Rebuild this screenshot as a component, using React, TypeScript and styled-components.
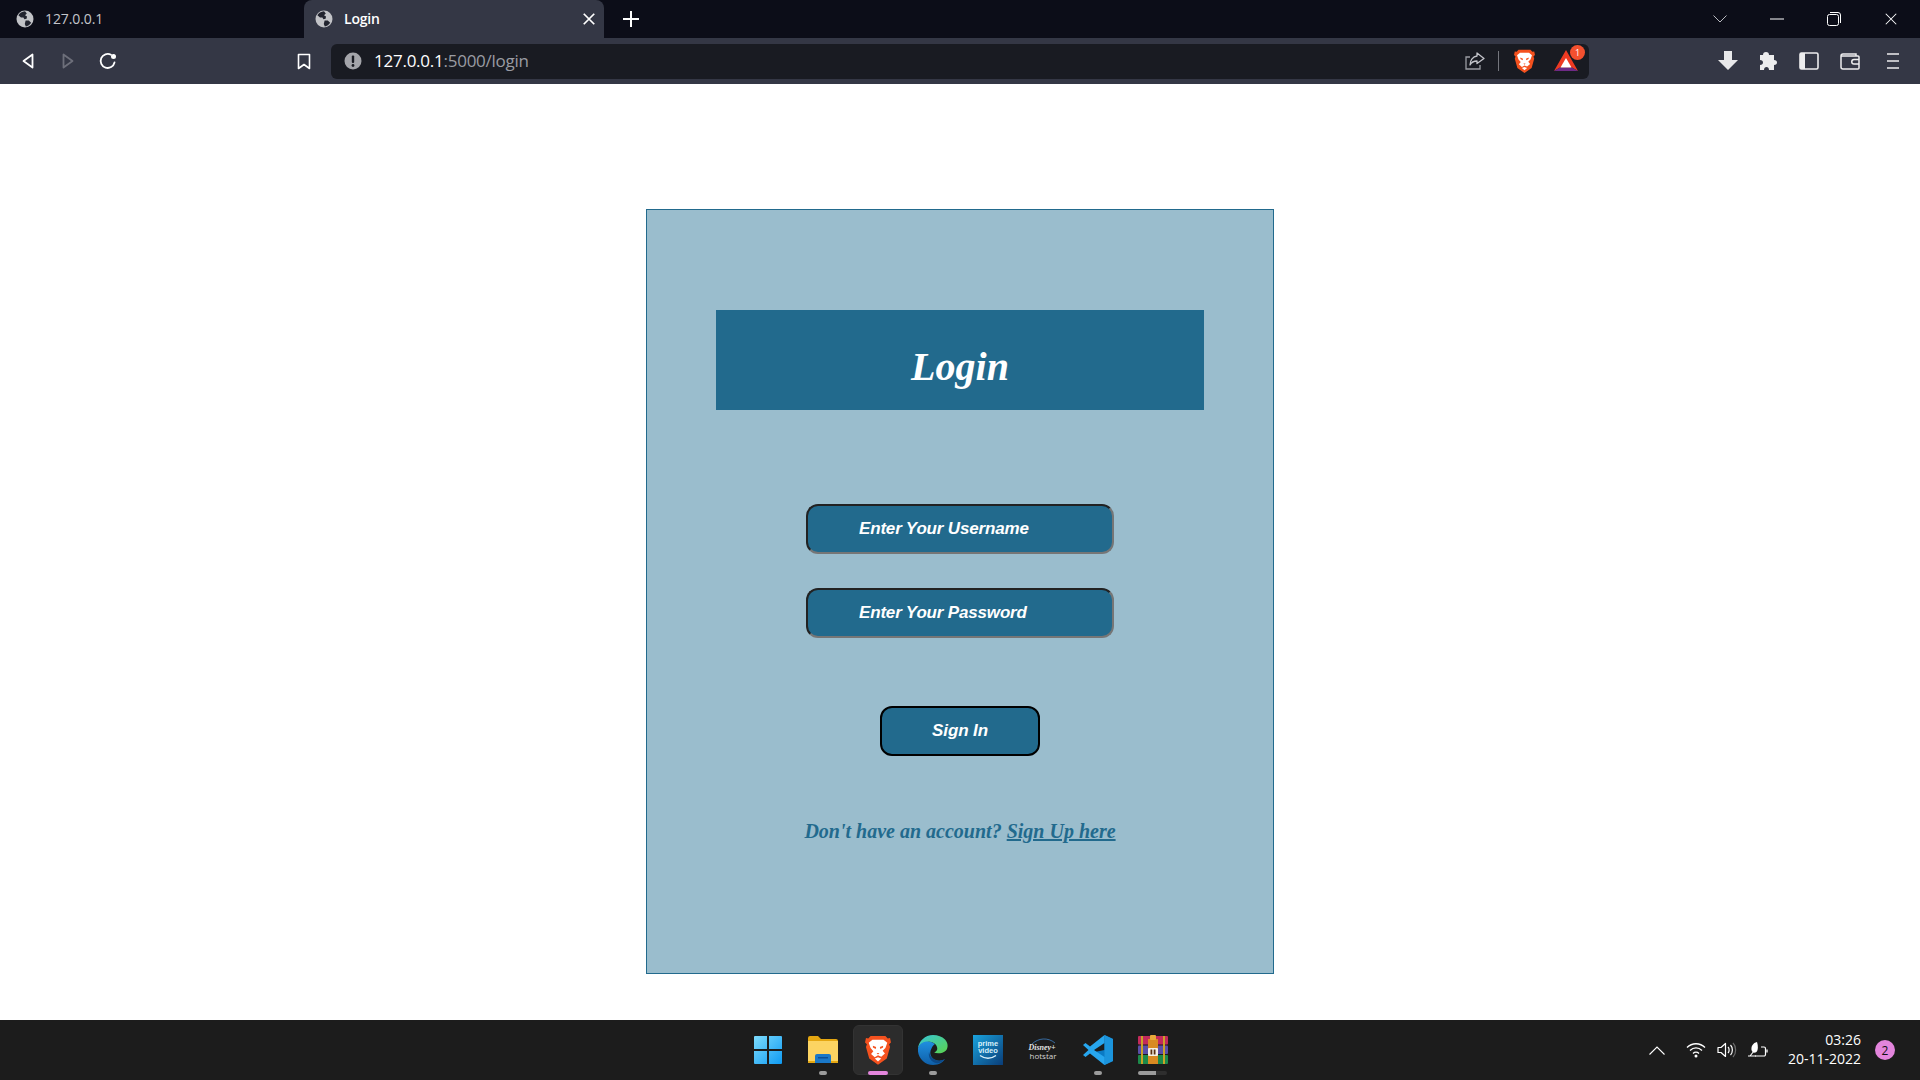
import React from "react";
import styled, { createGlobalStyle } from "styled-components";

const GlobalStyle = createGlobalStyle`
  html, body, #root {
    margin: 0;
    padding: 0;
    height: 100%;
  }
  body {
    background: #ffffff;
    overflow: hidden;
  }
  * {
    box-sizing: border-box;
  }
`;

const Page = styled.div`
  width: 1920px;
  height: 1080px;
  display: flex;
  flex-direction: column;
  font-family: "Open Sans", "Liberation Sans", sans-serif;
`;

/* browser chrome */
const TabStrip = styled.div`
  height: 38px;
  background: #0c0d18;
  display: flex;
  align-items: flex-start;
  flex-shrink: 0;
`;

const Tab = styled.div<{ $active?: boolean }>`
  width: ${(p) => (p.$active ? 300 : 304)}px;
  height: 38px;
  display: flex;
  align-items: center;
  padding-left: ${(p) => (p.$active ? 11 : 16)}px;
  gap: 11px;
  background: ${(p) => (p.$active ? "#343745" : "transparent")};
  border-radius: 8px 8px 0 0;
  font-size: 14px;
  font-weight: ${(p) => (p.$active ? 600 : 400)};
  color: ${(p) => (p.$active ? "#ffffff" : "#c4c5cb")};
  letter-spacing: ${(p) => (p.$active ? "-0.2px" : "-0.1px")};
`;

const TabLabel = styled.span`
  padding-bottom: 2px;
`;

const TabClose = styled.span`
  margin-left: auto;
  margin-right: 8px;
  width: 14px;
  height: 14px;
  display: flex;
`;

const NewTab = styled.div`
  width: 46px;
  height: 38px;
  padding-left: 19px;
  display: flex;
  align-items: center;
`;

const WindowControls = styled.div`
  margin-left: auto;
  display: flex;
  height: 38px;
  align-items: center;
`;

const WindowButton = styled.div<{ $w: number }>`
  width: ${(p) => p.$w}px;
  display: flex;
  justify-content: center;
  align-items: center;
`;

const Toolbar = styled.div`
  height: 46px;
  background: #343745;
  display: flex;
  align-items: center;
  padding-left: 8px;
  flex-shrink: 0;
`;

const ToolSlot = styled.div<{ $w?: number; $ml?: number }>`
  width: ${(p) => p.$w ?? 40}px;
  margin-left: ${(p) => p.$ml ?? 0}px;
  height: 35px;
  display: flex;
  align-items: center;
  justify-content: center;
  flex-shrink: 0;
`;

const AddressBar = styled.div`
  width: 1258px;
  height: 35px;
  margin-left: 7px;
  background: #191b22;
  border-radius: 6px;
  display: flex;
  align-items: center;
  padding-left: 13px;
  flex-shrink: 0;
`;

const UrlText = styled.div`
  margin-left: 12px;
  padding-bottom: 2px;
  font-size: 17px;
  letter-spacing: -0.25px;
  color: #9a9ca3;
`;

const UrlHost = styled.span`
  color: #ffffff;
`;

const AddressEnd = styled.div`
  margin-left: auto;
  display: flex;
  align-items: center;
  height: 35px;
`;

const Divider = styled.div`
  width: 1px;
  height: 20px;
  background: #74767d;
  margin: 0 12px 0 13px;
`;

const RightTools = styled.div`
  margin-left: 119px;
  display: flex;
  align-items: center;
`;

/* login card */
const Main = styled.main`
  flex: 1;
  background: #ffffff;
  display: flex;
  justify-content: center;
  align-items: flex-start;
  padding-top: 125px;
`;

const Card = styled.form`
  width: 628px;
  height: 765px;
  background: #9abdcd;
  border: 1px solid #226a8d;
  padding-top: 100px;
  display: flex;
  flex-direction: column;
  align-items: center;
`;

const Heading = styled.h1`
  width: 488px;
  height: 100px;
  margin: 0;
  background: #226a8d;
  color: #ffffff;
  font-family: "Liberation Serif", serif;
  font-style: italic;
  font-weight: 700;
  font-size: 40px;
  line-height: 114px;
  text-align: center;
`;

const Field = styled.input`
  width: 308px;
  height: 50px;
  margin-top: ${(p) => (p.name === "username" ? 94 : 34)}px;
  padding: 0 0 1px 51px;
  background: #226a8d;
  border: 2px solid;
  border-color: #222222 #767676 #767676 #222222;
  border-radius: 12px;
  color: #ffffff;
  font-family: "Liberation Sans", sans-serif;
  font-style: italic;
  font-weight: 700;
  font-size: 17px;
  letter-spacing: -0.17px;
  outline: none;
  &::placeholder {
    color: #ffffff;
    opacity: 1;
  }
`;

const SubmitButton = styled.button`
  width: 160px;
  height: 50px;
  margin-top: 68px;
  background: #226a8d;
  border: 2px solid #000000;
  border-radius: 12px;
  color: #ffffff;
  font-family: "Liberation Sans", sans-serif;
  font-style: italic;
  font-weight: 700;
  font-size: 17px;
  letter-spacing: -0.1px;
`;

const Footnote = styled.p`
  margin: 63px 0 0;
  color: #226a8d;
  font-family: "Liberation Serif", serif;
  font-style: italic;
  font-weight: 700;
  font-size: 20px;
  line-height: 24px;
`;

const SignUpLink = styled.a`
  color: #226a8d;
  text-decoration: underline;
`;

/* taskbar */
const Taskbar = styled.footer`
  height: 60px;
  background: #1c1c1c;
  display: flex;
  align-items: center;
  padding-left: 740px;
  flex-shrink: 0;
`;

const TaskItem = styled.div<{ $active?: boolean }>`
  position: relative;
  width: 55px;
  height: 50px;
  display: flex;
  align-items: center;
  justify-content: center;
  &::before {
    content: "";
    display: ${(p) => (p.$active ? "block" : "none")};
    position: absolute;
    inset: 0 2.5px;
    border-radius: 6px;
    background: #2c2c2c;
    border: 1px solid #333333;
  }
  svg {
    position: relative;
  }
`;

const RunDot = styled.span<{ $w?: number; $color?: string }>`
  position: absolute;
  left: 50%;
  bottom: 0;
  width: ${(p) => p.$w ?? 8}px;
  height: 4px;
  margin-left: ${(p) => -(p.$w ?? 8) / 2}px;
  border-radius: 2px;
  background: ${(p) => p.$color ?? "#9b9b9b"};
`;

const Tray = styled.div`
  margin-left: auto;
  display: flex;
  align-items: center;
  height: 60px;
  color: #ffffff;
`;

const TraySlot = styled.div<{ $w: number }>`
  width: ${(p) => p.$w}px;
  display: flex;
  justify-content: center;
  align-items: center;
`;

const Clock = styled.div`
  width: 80px;
  margin-left: 5px;
  padding-bottom: 2px;
  text-align: right;
  font-size: 14px;
  line-height: 19px;
`;

const Badge = styled.div`
  width: 20px;
  height: 20px;
  margin: 0 25px 0 14px;
  border-radius: 50%;
  background: #e385dc;
  color: #111111;
  font-size: 12px;
  display: flex;
  align-items: center;
  justify-content: center;
`;

const BatWrap = styled.div`
  position: relative;
  width: 24px;
  height: 22px;
`;

const BatCount = styled.span`
  position: absolute;
  top: -5px;
  right: -7px;
  width: 15px;
  height: 15px;
  border-radius: 50%;
  background: #f3502f;
  color: #ffffff;
  font-size: 9px;
  display: flex;
  align-items: center;
  justify-content: center;
`;

/* drawings */
const Globe = () => (
  <svg width="18" height="18" viewBox="0 0 18 18">
    <circle cx="9" cy="9" r="8.500" fill="#c2c3c7" />
    <path d="M9 1.200C6 1.500 3.600 3 2.400 5.200L5 7.600h2.400l1 1.600 2.200-.4.400-2.200L9 5.200l1.800-1.600z" fill="#22242f" />
    <path d="M9.600 10.400l3.200.2 2.400 2.200c-1.200 1.900-3.200 3.300-5.400 3.600l-1-2.400z" fill="#22242f" />
  </svg>
);

const Cross = ({ size, stroke, width = 1.5 }: { size: number; stroke: string; width?: number }) => (
  <svg width={size} height={size} viewBox="0 0 16 16">
    <path d="M2 2l12 12M14 2L2 14" stroke={stroke} strokeWidth={width} fill="none" />
  </svg>
);

const BraveLion = ({ size }: { size: number }) => (
  <svg width={size} height={size * 1.14} viewBox="0 0 28 32">
    <path d="M6 1h16l2.500 2.800L27 3.200 28 8l-2 2 1 3-3.500 12.500L14 32 4.500 25.500 1 13l1-3-2-2 1-4.800 2.500.6z" fill="#f4511e" />
    <path d="M8 5h12l4 3.500-2 5.500-3 3 2.500 3-4 3.500-3.500-1.500L10.500 24l-4-3.500L9 17.500 6 14 4 8.500z" fill="#ffffff" />
    <path d="M8.500 11.500l3.500 1.500-.5 2-3-1.500zM19.500 11.500L16 13l.5 2 3-1.500zM12.500 19.500h3L14 21z" fill="#f4511e" />
    <path d="M10.500 25.500l3.500-1.500 3.500 1.500L14 28.500z" fill="#ffffff" />
  </svg>
);

const BatLogo = () => (
  <svg width="24" height="22" viewBox="0 0 24 22">
    <path d="M12 0L0 21l6-3.500h12L24 21z" fill="#ee3a22" />
    <path d="M0 21h24l-6-3.500H6z" fill="#6e2a86" />
    <path d="M12 8l-5.500 9.500h11z" fill="#ffffff" />
  </svg>
);

const BatWithBadge = () => (
  <BatWrap>
    <BatLogo />
    <BatCount>1</BatCount>
  </BatWrap>
);

const WindowsLogo = () => (
  <svg width="30" height="30" viewBox="0 0 30 30">
    <defs>
      <linearGradient id="win" x1="0" y1="0" x2="1" y2="1">
        <stop offset="0" stopColor="#7ddcfd" />
        <stop offset="1" stopColor="#0f9af2" />
      </linearGradient>
    </defs>
    <path d="M1 2a1 1 0 0 1 1-1h12v13H1zM16 1h12a1 1 0 0 1 1 1v12H16zM1 16h13v13H2a1 1 0 0 1-1-1zM16 16h13v12a1 1 0 0 1-1 1H16z" fill="url(#win)" />
  </svg>
);

const FolderIcon = () => (
  <svg width="30" height="28" viewBox="0 0 30 28">
    <path d="M0 2a2 2 0 0 1 2-2h8l3 3h15a2 2 0 0 1 2 2v3H0z" fill="#e5a711" />
    <path d="M0 5h30v21a1 1 0 0 1-1 1H1a1 1 0 0 1-1-1z" fill="#fcd462" />
    <path d="M0 25h30v1a1 1 0 0 1-1 1H1a1 1 0 0 1-1-1z" fill="#e5a711" />
    <path d="M7 20a2 2 0 0 1 2-2h12a2 2 0 0 1 2 2v7H7z" fill="#1a78c8" />
    <path d="M10 21h10v1.500H10z" fill="#0c4f96" />
  </svg>
);

const EdgeLogo = () => (
  <svg width="30" height="30" viewBox="0 0 30 30">
    <defs>
      <linearGradient id="edgeA" x1="0" y1="0" x2="1" y2="1">
        <stop offset="0" stopColor="#36c5d9" />
        <stop offset="1" stopColor="#5bd34c" />
      </linearGradient>
      <linearGradient id="edgeB" x1="0" y1="0" x2="0" y2="1">
        <stop offset="0" stopColor="#1f8fe0" />
        <stop offset="1" stopColor="#0f5fa8" />
      </linearGradient>
    </defs>
    <path d="M15 0C7 0 1 6 0 13c3-5 8-7 13-6 5 1 7 5 6 8-1 2-3 2.500-3 2.500 3 1.500 9 1 12-2 2.500-3 2-8-1-11C24 1.500 20 0 15 0z" fill="url(#edgeA)" />
    <path d="M0 13C-1 22 6 30 15 30c6 0 10-3 12-6-4 2.500-9 2-12-.5-3-2.500-3.500-7-1.500-10C15 10 17 9 17 9c-7-5-15-2-17 4z" fill="url(#edgeB)" />
    <path d="M11 17c-1 5 2 10 7 11 4 1 7-1.500 9-4-4 2.500-9 2-12-.5-2.500-2-3.500-4-4-6.500z" fill="#0c4a8a" />
  </svg>
);

const PrimeVideo = () => (
  <svg width="30" height="30" viewBox="0 0 30 30">
    <defs>
      <linearGradient id="prime" x1="0" y1="0" x2="1" y2="1">
        <stop offset="0" stopColor="#1aa3dd" />
        <stop offset="1" stopColor="#0a3d78" />
      </linearGradient>
    </defs>
    <rect width="30" height="30" fill="url(#prime)" />
    <text x="15" y="11" textAnchor="middle" fontFamily="Liberation Sans" fontWeight="700" fontSize="7.500" fill="#d8f0fa">prime</text>
    <text x="15" y="18" textAnchor="middle" fontFamily="Liberation Sans" fontWeight="700" fontSize="7.500" fill="#d8f0fa">video</text>
    <path d="M7 20.500c5 3.500 11 3.500 16 0" stroke="#d8f0fa" strokeWidth="1.400" fill="none" />
  </svg>
);

const Hotstar = () => (
  <svg width="30" height="26" viewBox="0 0 30 26">
    <path d="M4 7C10 1 20 0 27 6" stroke="#3f7fc0" strokeWidth="0.800" fill="none" />
    <text x="14" y="13" textAnchor="middle" fontFamily="Liberation Serif" fontStyle="italic" fontWeight="700" fontSize="8" fill="#e2e2e2">Disney+</text>
    <text x="15" y="22" textAnchor="middle" fontFamily="Open Sans" fontSize="8" fill="#d4d4d4">hotstar</text>
  </svg>
);

const VsCode = () => (
  <svg width="30" height="30" viewBox="0 0 30 30">
    <path d="M21.500 0L30 4v22l-8.500 4L9 17.500l12.500-2.500z" fill="#0a7ac4" />
    <path d="M21.500 0L30 4v22l-8.500 4z" fill="#1b94dc" />
    <path d="M21.500 0v8L11 15l10.500 7v8L7 18.500 2.500 22 0 20l5.500-5L0 10l2.500-2L7 11.500z" fill="#27a6ee" />
  </svg>
);

const WinRar = () => (
  <svg width="30" height="30" viewBox="0 0 30 30">
    <rect y="1" width="30" height="8.500" rx="1" fill="#c22a5b" />
    <rect y="10.500" width="30" height="8.500" rx="1" fill="#5a4ea8" />
    <rect y="20" width="30" height="9" rx="1" fill="#1c8a4a" />
    <rect x="3" y="1" width="2" height="28" fill="#c9a227" />
    <rect x="25" y="1" width="2" height="28" fill="#c9a227" />
    <path d="M10 4h10v25H10z" fill="#d98a22" />
    <rect x="12" y="0" width="6" height="5" rx="1" fill="#e8a93a" />
    <rect x="10" y="13" width="10" height="8" rx="1" fill="#f4f0e6" />
    <rect x="12.500" y="14.500" width="1.800" height="5" fill="#5a2f10" />
    <rect x="15.700" y="14.500" width="1.800" height="5" fill="#5a2f10" />
  </svg>
);

export default function App() {
  return (
    <Page>
      <GlobalStyle />
      <TabStrip>
        <Tab>
          <Globe />
          <TabLabel>127.0.0.1</TabLabel>
        </Tab>
        <Tab $active>
          <Globe />
          <TabLabel>Login</TabLabel>
          <TabClose>
            <Cross size={14} stroke="#ffffff" width={2} />
          </TabClose>
        </Tab>
        <NewTab>
          <svg width="16" height="16" viewBox="0 0 16 16">
            <path d="M8 0v16M0 8h16" stroke="#ffffff" strokeWidth="2" />
          </svg>
        </NewTab>
        <WindowControls>
          <WindowButton $w={57}>
            <svg width="14" height="8" viewBox="0 0 14 8">
              <path d="M.5.500L7 7l6.500-6.500" stroke="#b9bac0" fill="none" />
            </svg>
          </WindowButton>
          <WindowButton $w={57}>
            <svg width="14" height="2" viewBox="0 0 14 2">
              <path d="M0 1h14" stroke="#ffffff" />
            </svg>
          </WindowButton>
          <WindowButton $w={57}>
            <svg width="14" height="14" viewBox="0 0 14 14">
              <rect x=".5" y="2.500" width="11" height="11" rx="2" stroke="#ffffff" fill="none" />
              <path d="M3 .5h8a2.500 2.500 0 0 1 2.500 2.500v8" stroke="#ffffff" fill="none" />
            </svg>
          </WindowButton>
          <WindowButton $w={58}>
            <Cross size={14} stroke="#ffffff" width={1.2} />
          </WindowButton>
        </WindowControls>
      </TabStrip>

      <Toolbar>
        <ToolSlot>
          <svg width="12" height="16" viewBox="0 0 12 16">
            <path d="M10.500 1.500v13L1.500 8z" stroke="#ffffff" strokeWidth="1.800" strokeLinejoin="round" fill="none" />
          </svg>
        </ToolSlot>
        <ToolSlot>
          <svg width="12" height="16" viewBox="0 0 12 16">
            <path d="M1.500 1.500v13l9-6.500z" stroke="#6d6f7a" strokeWidth="1.800" strokeLinejoin="round" fill="none" />
          </svg>
        </ToolSlot>
        <ToolSlot>
          <svg width="18" height="18" viewBox="0 0 18 18">
            <path d="M15.500 10.500A7 7 0 1 1 12 2.800" stroke="#ffffff" strokeWidth="1.800" strokeLinecap="round" fill="none" />
            <circle cx="14.500" cy="4.500" r="2.500" fill="#ffffff" />
          </svg>
        </ToolSlot>
        <ToolSlot $ml={156}>
          <svg width="14" height="17" viewBox="0 0 14 17">
            <path d="M1.500 1.500h11v14L7 11.500l-5.500 4z" stroke="#ffffff" strokeWidth="1.600" strokeLinejoin="round" fill="none" />
          </svg>
        </ToolSlot>
        <AddressBar>
          <ToolSlot $w={18}>
            <svg width="18" height="18" viewBox="0 0 18 18">
              <circle cx="9" cy="9" r="8.500" fill="#a4a5aa" />
              <rect x="7.800" y="3.500" width="2.400" height="7.500" rx="1" fill="#191b22" />
              <circle cx="9" cy="13.500" r="1.400" fill="#191b22" />
            </svg>
          </ToolSlot>
          <UrlText>
            <UrlHost>127.0.0.1</UrlHost>:5000/login
          </UrlText>
          <AddressEnd>
            <ToolSlot $w={20}>
              <svg width="20" height="18" viewBox="0 0 20 18">
                <path d="M5 5H1v12h14v-4" stroke="#9a9ca3" strokeWidth="1.300" fill="none" />
                <path d="M12 1l7 5.500-7 5V9C9 9 6.500 10 5 13c0-5 3-8.500 7-9z" stroke="#c4c5cb" strokeWidth="1.300" strokeLinejoin="round" fill="none" />
              </svg>
            </ToolSlot>
            <Divider />
            <ToolSlot $w={26}>
              <BraveLion size={21} />
            </ToolSlot>
            <ToolSlot $w={46} $ml={6}>
              <BatWithBadge />
            </ToolSlot>
          </AddressEnd>
        </AddressBar>
        <RightTools>
          <ToolSlot>
            <svg width="20" height="20" viewBox="0 0 20 20">
              <path d="M6 0h8v9h6l-10 10L0 9h6z" fill="#e8e8ea" />
            </svg>
          </ToolSlot>
          <ToolSlot>
            <svg width="18" height="18" viewBox="0 0 18 18">
              <path d="M7 0c2 0 3 1.200 3 3h5v5c2 0 3 1 3 2.500S17 13 15 13v5h-5c0-2-1-3-2.500-3S5 16 5 18H1v-5c2 0 3-1 3-2.500S3 8 1 8V3h3c0-1.800 1-3 3-3z" fill="#ededee" />
            </svg>
          </ToolSlot>
          <ToolSlot $w={41}>
            <svg width="20" height="18" viewBox="0 0 20 18">
              <rect x="1" y="1" width="18" height="16" rx="1.500" stroke="#ededee" strokeWidth="1.600" fill="none" />
              <rect x="1" y="1" width="5" height="16" fill="#ededee" />
            </svg>
          </ToolSlot>
          <ToolSlot $w={42}>
            <svg width="20" height="17" viewBox="0 0 20 17">
              <path d="M16 3V1H3a2 2 0 0 0-2 2v11a2 2 0 0 0 2 2h15a1 1 0 0 0 1-1V4a1 1 0 0 0-1-1H1" stroke="#ededee" strokeWidth="1.500" fill="none" />
              <path d="M19 6.500h-5a2 2 0 0 0 0 4.500h5" stroke="#ededee" strokeWidth="1.500" fill="none" />
            </svg>
          </ToolSlot>
          <ToolSlot $w={44}>
            <svg width="12" height="16" viewBox="0 0 12 16">
              <path d="M0 1h12M0 8h12M0 15h12" stroke="#ededee" strokeWidth="1.600" />
            </svg>
          </ToolSlot>
        </RightTools>
      </Toolbar>

      <Main>
        <Card onSubmit={(e) => e.preventDefault()}>
          <Heading>Login</Heading>
          <Field name="username" placeholder="Enter Your Username" />
          <Field name="password" type="password" placeholder="Enter Your Password" />
          <SubmitButton type="submit">Sign In</SubmitButton>
          <Footnote>
            Don't have an account? <SignUpLink href="#signup">Sign Up here</SignUpLink>
          </Footnote>
        </Card>
      </Main>

      <Taskbar>
        <TaskItem>
          <WindowsLogo />
        </TaskItem>
        <TaskItem>
          <FolderIcon />
          <RunDot />
        </TaskItem>
        <TaskItem $active>
          <BraveLion size={26} />
          <RunDot $w={20} $color="#e385dc" />
        </TaskItem>
        <TaskItem>
          <EdgeLogo />
          <RunDot />
        </TaskItem>
        <TaskItem>
          <PrimeVideo />
        </TaskItem>
        <TaskItem>
          <Hotstar />
        </TaskItem>
        <TaskItem>
          <VsCode />
          <RunDot />
        </TaskItem>
        <TaskItem>
          <WinRar />
          <RunDot $w={29} $color="linear-gradient(to right, #9b9b9b 62%, #2e2e2e 62%)" />
        </TaskItem>
        <Tray>
          <TraySlot $w={42}>
            <svg width="16" height="9" viewBox="0 0 16 9">
              <path d="M.5 8.500L8 1l7.500 7.500" stroke="#ffffff" strokeWidth="1.100" fill="none" />
            </svg>
          </TraySlot>
          <TraySlot $w={36}>
            <svg width="20" height="16" viewBox="0 0 20 16">
              <path d="M1 5.500c5-5 13-5 18 0M4 8.500c3.500-3.500 8.500-3.500 12 0M7 11.500c1.700-1.700 4.300-1.700 6 0" stroke="#ffffff" strokeWidth="1.300" fill="none" />
              <circle cx="10" cy="14" r="1.500" fill="#ffffff" />
            </svg>
          </TraySlot>
          <TraySlot $w={26}>
            <svg width="20" height="16" viewBox="0 0 20 16">
              <path d="M1 5.500h3L8.500 1.500v13L4 10.500H1z" stroke="#ffffff" strokeWidth="1.200" strokeLinejoin="round" fill="none" />
              <path d="M11 5c1.500 1.500 1.500 4.500 0 6M13.500 3c2.500 2.500 2.500 7.500 0 10" stroke="#ffffff" strokeWidth="1.200" fill="none" />
              <path d="M16 1c3.500 3.500 3.500 10.500 0 14" stroke="#6a6a6a" strokeWidth="1.200" fill="none" />
            </svg>
          </TraySlot>
          <TraySlot $w={36}>
            <svg width="20" height="16" viewBox="0 0 20 16">
              <path d="M7 14h9a1.500 1.500 0 0 0 1.500-1.500v-6A1.500 1.500 0 0 0 16 5h-3" stroke="#ffffff" strokeWidth="1.200" fill="none" />
              <path d="M19 7.500v3" stroke="#ffffff" strokeWidth="1.300" />
              <path d="M9 0C5 1 3 4 3.500 8 4 10 5.500 11 7.500 10.500 10 9.500 10.500 5 9 0z" fill="#ffffff" />
              <path d="M0 14h8M2 14l4-5" stroke="#ffffff" strokeWidth="1.100" fill="none" />
            </svg>
          </TraySlot>
          <Clock>
            <div>03:26</div>
            <div>20-11-2022</div>
          </Clock>
          <Badge>2</Badge>
        </Tray>
      </Taskbar>
    </Page>
  );
}
